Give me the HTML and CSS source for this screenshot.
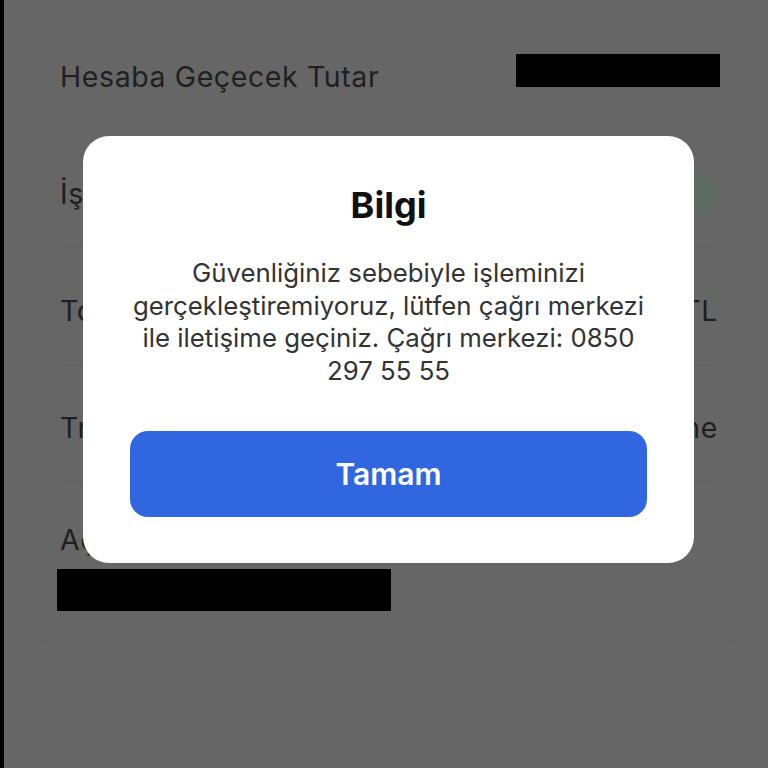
FILE: index.html
```html
<!DOCTYPE html>
<html lang="tr">
<head>
<meta charset="utf-8">
<title>Bilgi</title>
<link rel="stylesheet" href="styles.css">
</head>
<body>
<div class="screen">
  <div class="edge"></div>
  <main class="page">
    <section class="card">
      <div class="row">
        <span class="label">Hesaba Geçecek Tutar</span>
        <span class="redact redact-top"></span>
      </div>
      <div class="row">
        <span class="label">İşlem Onayı</span>
        <span class="toggle"></span>
      </div>
      <div class="row">
        <span class="label">Toplam Tutar</span>
        <span class="value">1.000,00 TL</span>
      </div>
      <div class="row">
        <span class="label">Transfer Türü</span>
        <span class="value">Hesap Sahibine</span>
      </div>
      <div class="row row-stack">
        <span class="label">Açıklama</span>
        <span class="redact redact-bottom"></span>
      </div>
    </section>
  </main>
  <div class="dialog" role="dialog">
    <h1 class="dialog-title">Bilgi</h1>
    <p class="dialog-text">Güvenliğiniz sebebiyle işleminizi gerçekleştiremiyoruz, lütfen çağrı merkezi ile iletişime geçiniz. Çağrı merkezi: 0850 297 55 55</p>
    <button class="dialog-btn" type="button">Tamam</button>
  </div>
</div>
</body>
</html>
```
FILE: styles.css
```css
html, body {
  margin: 0;
  padding: 0;
  background: #666666;
}
.screen {
  position: relative;
  width: 768px;
  height: 768px;
  display: flex;
  overflow: hidden;
  background: #666666;
}
.edge {
  width: 4px;
  flex: none;
  background: #000;
}
.page {
  flex: 1;
  padding: 14px 22px 0 26px;
}
.card {
  height: 630px;
  box-sizing: border-box;
  padding: 0 31px 0 29px;
  border-radius: 0 0 24px 24px;
  border-left: 1px solid #646464;
  border-right: 1px solid #646464;
  border-bottom: 1px solid #646464;
}
.row {
  height: 117px;
  box-sizing: border-box;
  padding-top: 10px;
  display: flex;
  align-items: center;
  justify-content: space-between;
  border-bottom: 1px solid #5f5f5f;
  font-family: Inter, "Noto Sans", sans-serif;
  font-size: 28.5px;
  letter-spacing: 0.6px;
  color: #1f1f1f;
}
.row-stack {
  height: auto;
  border-bottom: none;
  flex-direction: column;
  align-items: flex-start;
  justify-content: flex-start;
  padding-top: 40px;
}
.label { line-height: 36px; }
.value { line-height: 36px; margin-right: -4px; }
.redact {
  display: block;
  flex: none;
  background: #000;
}
.redact-top {
  width: 204px;
  height: 33px;
  margin-top: -14px;
  margin-right: -6px;
}
.redact-bottom {
  width: 334px;
  height: 42px;
  margin-top: 11px;
  margin-left: -3px;
}
.toggle {
  width: 40px;
  height: 40px;
  border-radius: 50%;
  background: #5e6a64;
  margin-right: -4px;
  filter: blur(1.5px);
}
.dialog {
  position: absolute;
  left: 83px;
  top: 136px;
  width: 611px;
  height: 427px;
  box-sizing: border-box;
  padding: 47px 47px 46px;
  background: #ffffff;
  border-radius: 26px;
  display: flex;
  flex-direction: column;
  align-items: stretch;
  font-family: Inter, "Noto Sans", sans-serif;
  text-align: center;
}
.dialog-title {
  margin: 0;
  font-size: 36px;
  line-height: 44px;
  font-weight: 700;
  color: #111111;
}
.dialog-text {
  margin: 30px 0 0;
  font-size: 25.8px;
  line-height: 32.5px;
  color: #333333;
}
.dialog-btn {
  margin-top: auto;
  height: 86px;
  border: none;
  border-radius: 18px;
  background: #3067e0;
  color: #ffffff;
  font-family: Inter, "Noto Sans", sans-serif;
  font-size: 30px;
  font-weight: 600;
}
```
